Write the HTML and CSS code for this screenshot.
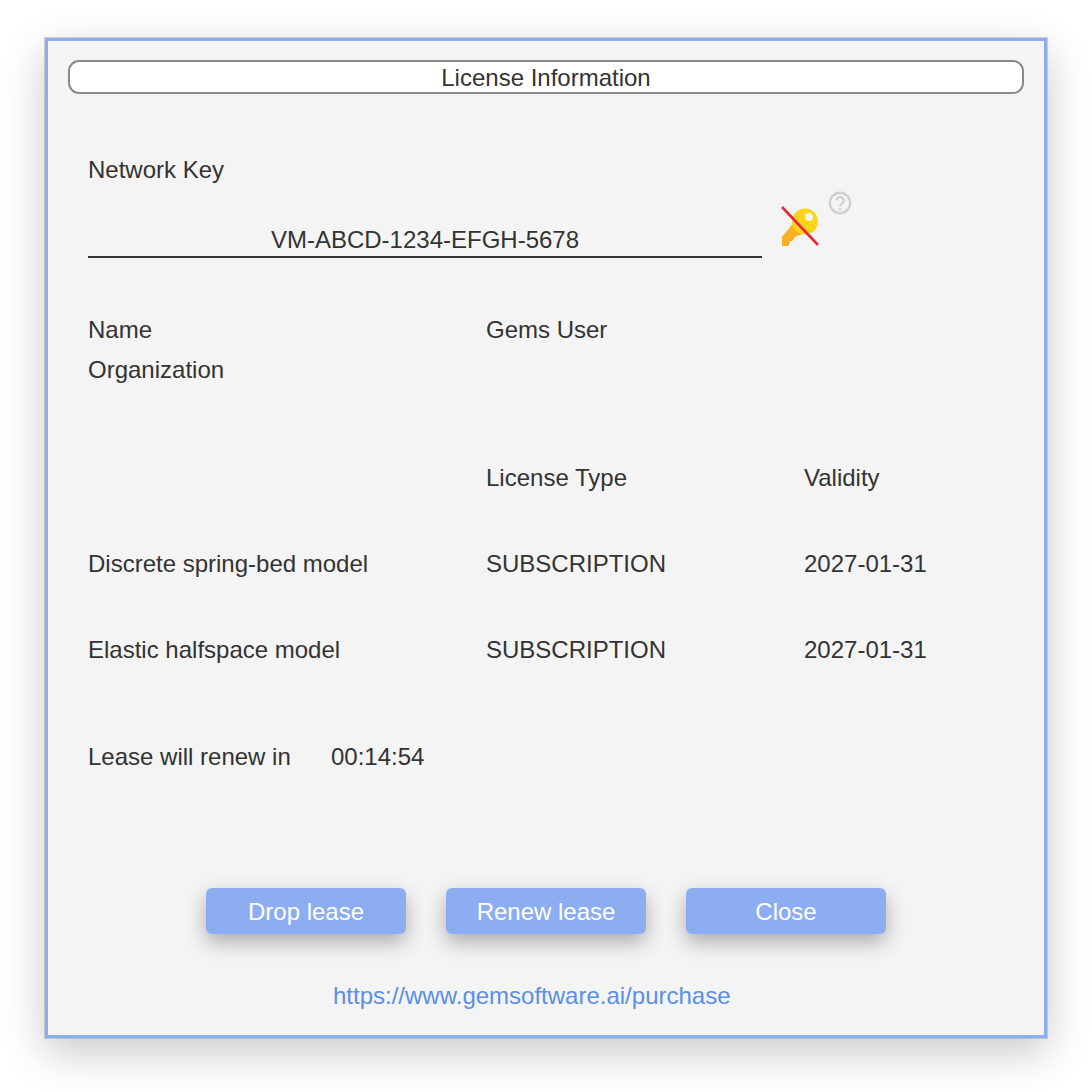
FILE: index.html
```html
<!DOCTYPE html>
<html lang="en">
<head>
  <meta charset="UTF-8" />
  <title>License Information</title>
  <link rel="stylesheet" href="styles.css">
</head>
<body>
  <div class="dialog">
    <div class="title">License Information</div>

    <div class="content">
      <div class="label key-label">Network Key</div>
      <div class="key-row">
        <div class="key-input">VM-ABCD-1234-EFGH-5678</div>
        <svg class="key-icon" width="38" height="40" viewBox="0 0 38 40">
          <path d="M12.3 17.3 L1 30.7 L1 40 L7.3 40 L9 35.7 L12.3 34 L14 30.7 L19 29 L22.3 27.3 Z" fill="#fbb126"/>
          <circle cx="24" cy="15.5" r="13" fill="#fdd31c"/>
          <circle cx="28" cy="11" r="4" fill="#f4f4f4"/>
          <path d="M1 1 L37 39" stroke="#e5283f" stroke-width="2.6"/>
        </svg>
        <svg class="help-icon" width="24" height="24" viewBox="0 0 24 24">
          <circle cx="12" cy="12" r="10.2" fill="none" stroke="#d0d0d0" stroke-width="2.4"/>
          <path d="M8.6 9.6 A3.5 3.5 0 1 1 13.8 12.6 C12.4 13.4 12 14 12 15.4" fill="none" stroke="#d0d0d0" stroke-width="2"/>
          <circle cx="12" cy="18" r="1.3" fill="#d0d0d0"/>
        </svg>
      </div>

      <div class="info-grid">
        <div>Name</div>
        <div class="wide">Gems User</div>
        <div>Organization</div>
        <div class="wide"></div>
      </div>

      <div class="license-table">
        <div class="row">
          <div></div>
          <div>License Type</div>
          <div>Validity</div>
        </div>
        <div class="row">
          <div>Discrete spring-bed model</div>
          <div>SUBSCRIPTION</div>
          <div>2027-01-31</div>
        </div>
        <div class="row">
          <div>Elastic halfspace model</div>
          <div>SUBSCRIPTION</div>
          <div>2027-01-31</div>
        </div>
      </div>

      <div class="lease">
        <span class="lease-label">Lease will renew in</span>
        <span>00:14:54</span>
      </div>
    </div>

    <div class="buttons">
      <button class="btn">Drop lease</button>
      <button class="btn">Renew lease</button>
      <button class="btn">Close</button>
    </div>

    <a class="link" href="#">https://www.gemsoftware.ai/purchase</a>
  </div>
</body>
</html>
```

FILE: styles.css
```css
html, body {
  height: 1092px;
  overflow: hidden;
}
body {
  box-sizing: border-box;
  margin: 0;
  padding: 38px 0 0 45px;
  background: #fff;
  font-family: "Liberation Sans", Arial, sans-serif;
  font-size: 24px;
  color: #333;
}
.dialog {
  box-sizing: border-box;
  width: 1002px;
  height: 1000px;
  padding: 19px 20px 0;
  background: #f4f4f4;
  border: 3px solid #8cadf2;
  box-shadow: 0 0 0 1px rgba(120, 120, 120, 0.3), 0 14px 40px rgba(0, 0, 0, 0.22);
}
.title {
  box-sizing: border-box;
  height: 34px;
  line-height: 32px;
  text-align: center;
  background: #fff;
  border: 2px solid #8a8a8a;
  border-radius: 11px;
}
.content {
  padding: 0 20px;
}
.label {
  line-height: 30px;
}
.key-label {
  margin-top: 61px;
}
.key-row {
  position: relative;
  display: flex;
  align-items: flex-end;
  margin-top: 8px;
  height: 65px;
}
.key-input {
  box-sizing: border-box;
  width: 674px;
  height: 35px;
  padding-top: 2px;
  line-height: 30px;
  text-align: center;
  border-bottom: 2px solid #333;
}
.key-icon {
  margin: 0 0 12px 19px;
}
.help-icon {
  position: absolute;
  left: 740px;
  top: -2px;
}
.info-grid {
  display: grid;
  grid-template-columns: 398px 1fr;
  grid-auto-rows: 40px;
  line-height: 40px;
  margin-top: 52px;
}
.license-table {
  margin-top: 68px;
}
.row {
  display: grid;
  grid-template-columns: 398px 318px 1fr;
  height: 86px;
  line-height: 40px;
}
.lease {
  display: flex;
  margin-top: 21px;
  line-height: 40px;
}
.lease-label {
  width: 243px;
}
.buttons {
  display: flex;
  justify-content: center;
  gap: 40px;
  margin-top: 111px;
}
.btn {
  width: 200px;
  height: 46px;
  padding: 2px 0 0;
  font: inherit;
  color: #fff;
  background: #8cadf2;
  border: none;
  border-radius: 6px;
  box-shadow: 0 8px 20px rgba(0, 0, 0, 0.3);
}
.link {
  display: block;
  margin: 42px 0 0 20px;
  padding-left: 245px;
  line-height: 40px;
  color: #5b8fe8;
  text-decoration: none;
}
```
